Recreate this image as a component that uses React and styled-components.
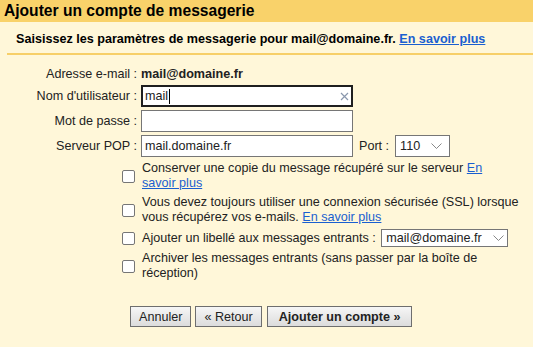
import React from "react";
import styled, { createGlobalStyle } from "styled-components";

const Global = createGlobalStyle`
  html, body { margin: 0; padding: 0; background: #fff7d9; }
  body { font-family: "Liberation Sans", Arial, sans-serif; font-size: 12.6px; color: #222; }
`;

const Page = styled.div`
  width: 533px;
  height: 347px;
  background: #fff7d9;
  overflow: hidden;
`;

const Header = styled.div`
  height: 22px;
  line-height: 22px;
  background: #f9d26a;
  padding-left: 4px;
  font-weight: bold;
  font-size: 15.6px;
  color: #000;
`;

const Intro = styled.div`
  margin-left: 7px;
  padding: 9px 0 6px 9px;
  line-height: 16px;
  font-weight: bold;
  font-size: 12.6px;
  color: #000;
  border-bottom: 2px solid #f7cf68;
`;

const Link = styled.a`
  color: #1a5fd0;
  text-decoration: underline;
  cursor: pointer;
  font-weight: ${(p) => (p.$bold ? "bold" : "normal")};
`;

const Form = styled.div`
  padding-top: 9px;
  display: flex;
  flex-direction: column;
`;

const Row = styled.div`
  display: grid;
  grid-template-columns: 137px auto;
  column-gap: 4px;
  align-items: center;
  height: ${(p) => p.$h || 22}px;
  margin-top: ${(p) => p.$mt || 0}px;
`;

const Label = styled.div`
  text-align: right;
  white-space: nowrap;
  color: #222;
`;

const Value = styled.div`
  font-weight: bold;
  color: #222;
`;

const InputWrap = styled.div`
  position: relative;
  display: flex;
  align-items: center;
  gap: 6px;
`;

const Input = styled.input`
  box-sizing: border-box;
  width: 212px;
  height: 22px;
  margin: 0;
  font-family: "Liberation Sans", Arial, sans-serif;
  font-size: 12.6px;
  color: #222;
  background: #fff;
  border: ${(p) => (p.$focused ? "2px solid #1f1f1f" : "1px solid #767676")};
  padding: 0 4px 0 ${(p) => (p.$focused ? 2 : 3)}px;
  outline: none;
`;

const Clear = styled.svg`
  position: absolute;
  left: 199px;
  top: 7px;
  pointer-events: none;
`;

const Caret = styled.span`
  position: absolute;
  left: 28px;
  top: 4px;
  width: 1px;
  height: 15px;
  background: #000;
`;

const SelectBox = styled.div`
  position: relative;
  display: inline-flex;
  align-items: center;
  box-sizing: border-box;
  width: ${(p) => p.$w}px;
  height: ${(p) => p.$h}px;
  border: 1px solid #767676;
  background: #fff;
  padding-left: 4px;
  color: #222;
  margin-left: ${(p) => p.$ml || 0}px;
`;

const Chevron = styled.svg`
  position: absolute;
  right: ${(p) => p.$r}px;
  top: 50%;
  margin-top: -3px;
`;

const Checks = styled.div`
  display: flex;
  flex-direction: column;
  gap: 4px;
  margin-top: 4px;
  padding-left: 122px;
  width: 406px;
`;

const CheckRow = styled.div`
  display: flex;
  align-items: center;
  min-height: ${(p) => p.$min || 0}px;
`;

const Box = styled.span`
  flex: none;
  box-sizing: border-box;
  width: 13px;
  height: 13px;
  border: 1px solid #767676;
  border-radius: 2px;
  background: #fff;
  margin-right: 7px;
`;

const CheckText = styled.div`
  line-height: 15px;
  color: #222;
  display: flex;
  align-items: center;
  flex-wrap: wrap;
`;

const Buttons = styled.div`
  display: flex;
  gap: 4px;
  margin-top: 25px;
  padding-left: 130px;
`;

const Button = styled.button`
  box-sizing: border-box;
  height: 21px;
  margin: 0;
  padding: 0 ${(p) => (p.$primary ? 11 : 8)}px;
  font-family: "Liberation Sans", Arial, sans-serif;
  font-size: 12.6px;
  font-weight: ${(p) => (p.$primary ? "bold" : "normal")};
  color: #222;
  border: 1px solid #6e6e6e;
  border-radius: 0;
  background: linear-gradient(#f6f6f6, #dcdcdc);
  margin-left: ${(p) => p.$ml || 0}px;
`;

const ChevronIcon = ({ r }) => (
  <Chevron $r={r} width="11" height="6" viewBox="0 0 11 6">
    <path d="M0.5 0.5 L5.5 5.5 L10.5 0.5" fill="none" stroke="#7a7a7a" strokeWidth="0.9" />
  </Chevron>
);

export default function App() {
  return (
    <Page>
      <Global />
      <Header>Ajouter un compte de messagerie</Header>
      <Intro>
        Saisissez les paramètres de messagerie pour mail@domaine.fr. <Link $bold>En savoir plus</Link>
      </Intro>
      <Form>
        <Row $h={20}>
          <Label>Adresse e-mail :</Label>
          <Value>mail@domaine.fr</Value>
        </Row>
        <Row $mt={1}>
          <Label>Nom d'utilisateur :</Label>
          <InputWrap>
            <Input $focused defaultValue="mail" readOnly />
            <Caret />
            <Clear width="9" height="9" viewBox="0 0 9 9">
              <path d="M1 1 L8 8 M8 1 L1 8" stroke="#8a97ad" strokeWidth="1.2" />
            </Clear>
          </InputWrap>
        </Row>
        <Row $mt={3}>
          <Label>Mot de passe :</Label>
          <InputWrap>
            <Input type="password" defaultValue="" readOnly />
          </InputWrap>
        </Row>
        <Row $mt={3}>
          <Label>Serveur POP :</Label>
          <InputWrap>
            <Input defaultValue="mail.domaine.fr" readOnly />
            <span>Port :</span>
            <SelectBox $w={55} $h={22}>
              110
              <ChevronIcon r={7} />
            </SelectBox>
          </InputWrap>
        </Row>
      </Form>
      <Checks>
        <CheckRow>
          <Box />
          <CheckText>
            <span>
              Conserver une copie du message récupéré sur le serveur <Link>En<br />savoir plus</Link>
            </span>
          </CheckText>
        </CheckRow>
        <CheckRow>
          <Box />
          <CheckText>
            <span>
              Vous devez toujours utiliser une connexion sécurisée (SSL) lorsque vous récupérez vos e-mails.{" "}
              <Link>En savoir plus</Link>
            </span>
          </CheckText>
        </CheckRow>
        <CheckRow $min={18}>
          <Box />
          <CheckText>
            <span>Ajouter un libellé aux messages entrants :&nbsp;</span>
            <SelectBox $w={127} $h={18} $ml={2}>
              mail@domaine.fr
              <ChevronIcon r={3} />
            </SelectBox>
          </CheckText>
        </CheckRow>
        <CheckRow>
          <Box />
          <CheckText>
            <span>Archiver les messages entrants (sans passer par la boîte de réception)</span>
          </CheckText>
        </CheckRow>
      </Checks>
      <Buttons>
        <Button>Annuler</Button>
        <Button>« Retour</Button>
        <Button $primary $ml={1}>Ajouter un compte »</Button>
      </Buttons>
    </Page>
  );
}
